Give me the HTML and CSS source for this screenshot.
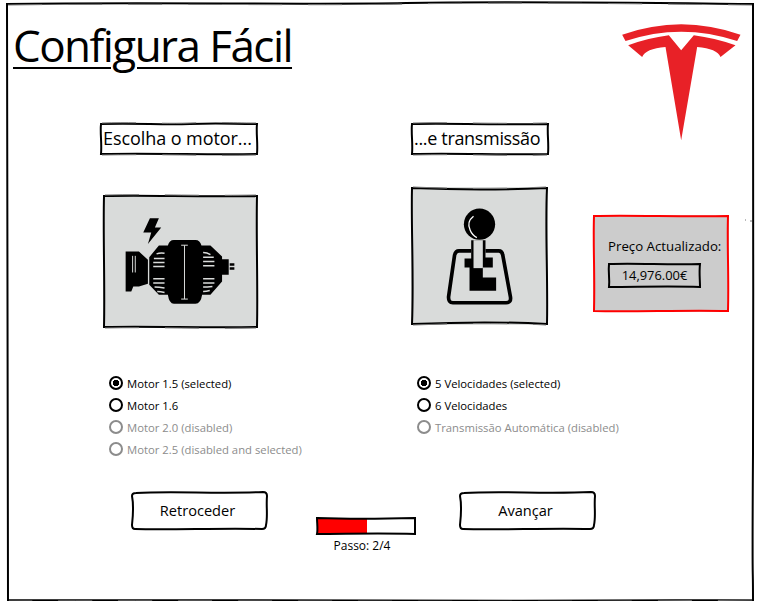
FILE: index.html
```html
<!DOCTYPE html>
<html lang="pt">

<head>
  <meta charset="utf-8">
  <title>Configura Fácil</title>
  <link rel="stylesheet" href="styles.css">
</head>

<body>
  <div class="frame">
    <svg class="sketch" width="748" height="598">
      <path d="M1 1C150 -1 300 2 400 0S650 0 747 1C746 100 748 300 747 450S747 550 747 597C500 599 300 596 2 597C1 450 3 250 1 1Z" />
      <path class="ghost" d="M2 2C150 0 300 3 400 1S650 1 746 2M746 597C500 600 300 597 3 598" />
      <path class="ghost" d="M739 217h1M744 218h2" />
    </svg>

    <header class="top">
      <h1 class="title">Configura Fácil</h1>
      <!-- logo -->
      <svg class="logo" viewBox="185 68 356 354">
        <path d="M185 103Q362 40 540 103L530 122Q362 66 195 122Z" />
        <path d="M203 135Q262 113 325 105L362 150L400 105Q463 113 525 135L480 170Q470 145 410 140L362 420L315 140Q255 145 245 170Z" />
      </svg>
    </header>

    <main class="content">
      <section class="col col-motor">
        <h2 class="heading">
          <svg class="sketch" width="158" height="32">
            <path d="M1 1C40 0 60 2 90 1S130 1 157 1C156 10 158 20 157 31C110 32 60 30 1 31C2 20 0 10 1 1Z" />
            <path class="ghost" d="M2 0C40 -1 60 1 90 0S130 0 156 0M2 32C60 31 110 33 156 32" />
          </svg>
          Escolha o motor...
        </h2>
        <div class="picture picture-motor">
          <svg class="sketch" width="155" height="133">
            <path d="M1 1C50 0 90 2 154 1C153 40 155 90 154 132C100 133 50 131 1 132C2 90 0 40 1 1Z" />
            <path class="ghost" d="M2 0C50 -1 90 1 153 0M2 133C50 132 100 134 153 133" />
          </svg>
          <!-- motor -->
          <svg class="icon" viewBox="40 45 460 400">
            <path d="M178 115H205L193 143H212L172 192L182 158H158Z" />
            <path d="M105 215H145L172 240V312L145 320L128 320L122 335H105Z" />
            <path d="M176 232L205 197H232Q236 180 250 180H315Q329 180 333 197H360L395 230V238H415V285H395V305L360 345H335Q331 372 315 372H250Q236 372 232 345H205L176 315Z" />
            <path d="M418 250H432V258H418ZM418 262H432V270H418Z" />
            <path class="gap gap-thin" d="M126 228V278M134 228V278" />
            <path class="gap" d="M198 222Q208 218 222 220M190 236H222M188 248H222M188 260H222" />
            <path class="gap" d="M188 297H222M188 310H222M192 322Q205 322 222 325M200 335Q210 335 222 338" />
            <path class="gap" d="M338 218Q350 218 360 224M338 232H370M338 245H372M338 258H372" />
            <path class="gap" d="M338 297H372M338 310H372M338 322Q350 322 366 320M338 335Q348 335 358 332" />
            <path class="gap gap-thin" d="M282 196V358M272 196H292M272 358H292" />
          </svg>
        </div>
        <ul class="options">
          <li class="option selected"><span class="radio"></span>Motor 1.5 (selected)</li>
          <li class="option"><span class="radio"></span>Motor 1.6</li>
          <li class="option disabled"><span class="radio"></span>Motor 2.0 (disabled)</li>
          <li class="option disabled"><span class="radio"></span>Motor 2.5 (disabled and selected)</li>
        </ul>
      </section>

      <section class="col col-gear">
        <h2 class="heading">
          <svg class="sketch" width="138" height="32">
            <path d="M1 1C40 0 70 2 137 1C136 10 138 20 137 31C90 32 50 30 1 31C2 20 0 10 1 1Z" />
            <path class="ghost" d="M2 0C40 -1 70 1 136 0M2 32C50 31 90 33 136 32" />
          </svg>
          ...e transmissão
        </h2>
        <div class="picture picture-gear">
          <svg class="sketch" width="137" height="138">
            <path d="M1 1C50 3 90 3 136 1C134 40 137 90 136 137C100 135 50 135 1 137C3 90 0 40 1 1Z" />
            <path class="ghost" d="M2 0C50 2 90 2 135 0M2 138C50 136 100 136 135 138" />
          </svg>
          <!-- gear stick -->
          <svg class="icon" viewBox="35 20 410 415">
            <circle cx="240" cy="132" r="47" />
            <path class="shine" d="M222 108Q200 125 212 150Q218 165 232 172" />
            <path class="frame-line" d="M215 212H178Q168 212 165 225L147 350Q146 368 160 368H320Q336 368 333 350L310 225Q308 212 298 212H258" />
            <path d="M215 180H258V232H280V262H250V292H290V332H210V262H195V235H215Z" />
            <path class="gap" d="M222 180H250V264H222Z" />
          </svg>
        </div>
        <ul class="options">
          <li class="option selected"><span class="radio"></span>5 Velocidades (selected)</li>
          <li class="option"><span class="radio"></span>6 Velocidades</li>
          <li class="option disabled"><span class="radio"></span>Transmissão Automática (disabled)</li>
        </ul>
      </section>

      <aside class="price">
        <svg class="sketch sketch-red" width="136" height="97">
          <path d="M1 1C40 0 90 2 135 1C134 30 136 60 135 96C90 95 40 97 1 96C2 60 0 30 1 1Z" />
        </svg>
        <div class="price-label">Preço Actualizado:</div>
        <div class="price-value">
          <svg class="sketch" width="93" height="25">
            <path d="M1 1C30 0 60 2 92 1C91 10 92 16 92 24C60 23 30 24 1 24C2 16 0 10 1 1Z" />
          </svg>
          14,976.00€
        </div>
      </aside>
    </main>

    <footer class="bottom">
      <button class="btn" type="button">
        <svg class="sketch" width="137" height="39">
          <path d="M5 2C40 0 90 3 132 1Q136 1 136 5C135 15 137 25 135 34Q135 38 131 38C90 37 40 39 4 38Q1 38 1 34C2 25 3 15 1 5Q1 2 5 2Z" />
        </svg>
        Retroceder
      </button>
      <div class="progress">
        <div class="bar">
          <svg class="sketch" width="100" height="18">
            <path d="M1 1C30 2 60 2 99 1V17C60 16 30 17 1 17C2 12 1 6 1 1Z" />
          </svg>
          <div class="bar-fill"></div>
        </div>
        <div class="step">Passo: 2/4</div>
      </div>
      <button class="btn" type="button">
        <svg class="sketch" width="137" height="39">
          <path d="M5 2C40 0 90 3 132 1Q136 1 136 5C135 15 137 25 135 34Q135 38 131 38C90 37 40 39 4 38Q1 38 1 34C2 25 3 15 1 5Q1 2 5 2Z" />
        </svg>
        Avançar
      </button>
    </footer>
  </div>
</body>

</html>
```

FILE: styles.css
```css
* {
  box-sizing: border-box;
}

body {
  margin: 0;
  background: #fff;
  color: #000;
  font-family: "Open Sans", "Noto Sans", sans-serif;
}

.frame {
  position: relative;
  width: 748px;
  height: 598px;
  margin: 3px 0 0 6px;
}

/* hand drawn outline that sits on top of its box */
.sketch {
  position: absolute;
  top: 0;
  left: 0;
  overflow: visible;
  pointer-events: none;
}

.sketch path {
  fill: none;
  stroke: #000;
  stroke-width: 2;
}

.sketch .ghost {
  stroke: #777;
  stroke-width: 1;
  stroke-dasharray: 34 26;
}

.sketch-red path {
  stroke: #f00;
}

.top {
  display: flex;
  justify-content: space-between;
  align-items: flex-start;
  height: 120px;
  padding: 12px 13px 0 7px;
}

.title {
  margin: 0;
  font-size: 44px;
  line-height: 60px;
  font-weight: 400;
  letter-spacing: -1.55px;
  text-decoration: underline;
  text-decoration-thickness: 2px;
  text-underline-offset: 5px;
}

.logo {
  width: 119px;
  height: 118px;
  margin-top: 8px;
  fill: #e82127;
}

.content {
  display: flex;
  height: 368px;
  padding-left: 94px;
}

.col-motor {
  width: 158px;
  margin-right: 153px;
}

.col-gear {
  width: 138px;
  margin-right: 44px;
}

.heading {
  position: relative;
  display: flex;
  align-items: center;
  height: 32px;
  margin: 0;
  padding: 0 0 2px 3px;
  font-size: 18px;
  font-weight: 400;
  letter-spacing: -0.07px;
  white-space: nowrap;
}

.col-gear .heading {
  letter-spacing: -0.33px;
}

.picture {
  position: relative;
  background: #d9dbda;
}

.picture-motor {
  width: 155px;
  height: 133px;
  margin: 40px 0 44px 3px;
}

.picture-gear {
  width: 137px;
  height: 138px;
  margin: 32px 0 47px 0;
}

.icon {
  display: block;
  width: 100%;
  height: 100%;
}

.gap {
  fill: none;
  stroke: #d9dbda;
  stroke-width: 4.5;
}

.gap-thin {
  stroke-width: 3;
}

.col-gear .gap {
  fill: #d9dbda;
  stroke: none;
}

.shine {
  fill: none;
  stroke: #fff;
  stroke-width: 4;
}

.frame-line {
  fill: none;
  stroke: #000;
  stroke-width: 11;
}

.options {
  margin: 0;
  padding: 0 0 0 9px;
  list-style: none;
}

.col-gear .options {
  padding-left: 6px;
}

.option {
  display: flex;
  align-items: center;
  height: 22px;
  font-size: 11.3px;
  white-space: nowrap;
}

.option.disabled {
  color: #8c8c8c;
}

.radio {
  flex: none;
  width: 14px;
  height: 14px;
  margin-right: 4px;
  border: 2px solid #000;
  border-radius: 50%;
}

.option.disabled .radio {
  border-color: #8c8c8c;
}

.option.selected .radio {
  background: radial-gradient(circle, #000 0 3px, transparent 3.5px);
}

.price {
  position: relative;
  width: 136px;
  height: 97px;
  margin-top: 92px;
  padding: 22px 0 0 15px;
  background: #ccc;
}

.price-label {
  font-size: 13.25px;
  line-height: 18px;
  white-space: nowrap;
}

.price-value {
  position: relative;
  display: flex;
  justify-content: center;
  align-items: center;
  width: 93px;
  height: 25px;
  margin-top: 8px;
  padding-bottom: 1px;
  font-size: 12.9px;
}

.bottom {
  display: flex;
  align-items: flex-start;
  gap: 48px;
  padding-left: 125px;
}

.btn {
  position: relative;
  width: 137px;
  height: 39px;
  padding: 0 4px 2px 0;
  border: none;
  background: #fff;
  color: #000;
  font-family: inherit;
  font-size: 14.6px;
}

.bottom .btn:last-child {
  margin-left: -5px;
}

.progress {
  width: 100px;
  margin-top: 26px;
}

.bar {
  position: relative;
  height: 18px;
  padding: 2px;
  background: #fff;
}

.bar-fill {
  width: 49px;
  height: 14px;
  background: #f00;
}

.step {
  margin-top: 3px;
  margin-left: -8px;
  font-size: 12px;
  line-height: 16px;
  text-align: center;
}
```
